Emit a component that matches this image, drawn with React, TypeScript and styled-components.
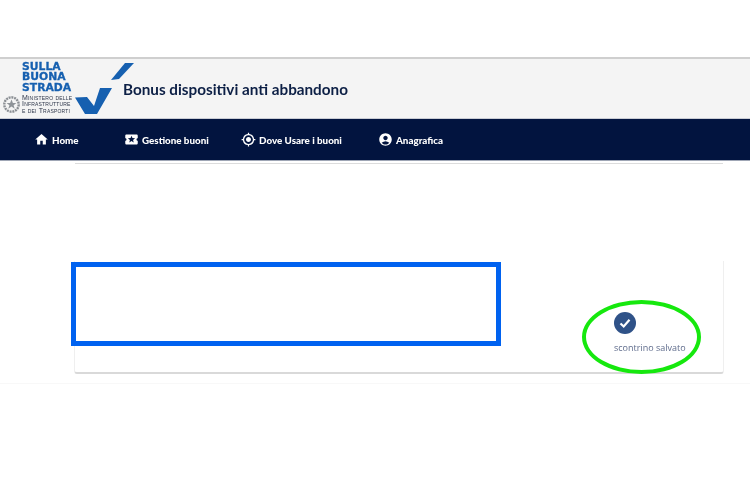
import React from "react";
import styled, { createGlobalStyle } from "styled-components";
import { MdHome, MdLocalActivity, MdMyLocation, MdAccountCircle } from "react-icons/md";

const Global = createGlobalStyle`
  html, body { margin: 0; padding: 0; background: #fff; }
  body { font-family: "Open Sans", "Liberation Sans", sans-serif; width: 750px; height: 480px; overflow: hidden; }
`;

const Page = styled.div`
  display: flex;
  flex-direction: column;
  padding-top: 57px;
`;

const Header = styled.header`
  display: flex;
  align-items: stretch;
  height: 59px;
  background: #f4f4f4;
  border-top: 2px solid #cfcfcf;
  box-sizing: content-box;
  border-bottom: 1px solid #c9ccd4;
`;

const Brand = styled.div`
  display: flex;
  flex-direction: column;
  width: 76px;
  padding: 3px 0 0 3px;
  box-sizing: border-box;
  flex: none;
`;

const BrandName = styled.div`
  margin-left: 19px;
  font-family: "DejaVu Sans", sans-serif;
  font-weight: 700;
  font-size: 10.8px;
  line-height: 10.4px;
  -webkit-text-stroke: 0.3px #1660b0;
  color: #1660b0;
  filter: blur(0.3px);
`;

const Ministry = styled.div`
  display: flex;
  align-items: center;
  gap: 2px;
  margin-top: 1px;
`;

const MinistryText = styled.div`
  font-family: "Liberation Sans", sans-serif;
  font-variant: small-caps;
  font-size: 7px;
  line-height: 6.6px;
  letter-spacing: 0.2px;
  color: #2b3448;
  white-space: nowrap;
  filter: blur(0.25px);
`;

const CheckMark = styled.svg`
  flex: none;
  width: 62px;
  height: 59px;
  margin-left: -4px;
`;

const Title = styled.h1`
  margin: 0 0 0 -11px;
  align-self: center;
  padding-top: 1px;
  font-family: "Lato", sans-serif;
  font-weight: 700;
  font-size: 15.25px;
  color: #0c1f45;
  white-space: nowrap;
  filter: blur(0.3px);
`;

const Nav = styled.nav`
  display: grid;
  grid-template-columns: 90px 117px 137px 1fr;
  align-items: center;
  height: 41px;
  padding-left: 35px;
  background: #02143f;
  border-bottom: 1px solid #9fa6b5;
`;

const NavItem = styled.a`
  display: flex;
  align-items: center;
  gap: 3px;
  color: #fff;
  font-family: "Lato", sans-serif;
  font-weight: 900;
  font-size: 9.8px;
  white-space: nowrap;
  filter: blur(0.3px);
  svg { width: 15px; height: 15px; flex: none; margin-left: -1px; }
`;

const CardTail = styled.div`
  height: 2px;
  margin: 0 27px 0 75px;
  background: #fff;
  border-bottom: 1px solid #dcdcdc;
`;

const Card = styled.section`
  position: relative;
  display: flex;
  justify-content: flex-end;
  height: 113px;
  margin: 97px 26px 0 74px;
  background: #fff;
  border-left: 1px solid #efefef;
  border-right: 1px solid #efefef;
  border-bottom: 2px solid #d9d9d9;
  border-radius: 0 0 3px 3px;
  box-sizing: border-box;
`;

const Redaction = styled.div`
  position: absolute;
  left: -4px;
  top: 1px;
  width: 430px;
  height: 84px;
  box-sizing: border-box;
  border: 5px solid #0062f0;
`;

const Status = styled.div`
  position: relative;
  display: flex;
  flex-direction: column;
  align-items: flex-start;
  gap: 8px;
  width: 109px;
  padding-top: 51px;
  box-sizing: border-box;
`;

const StatusIcon = styled.span`
  display: flex;
  align-items: center;
  justify-content: center;
  width: 22px;
  height: 22px;
  border-radius: 50%;
  background: #2f5288;
  color: #fff;
`;

const StatusText = styled.span`
  font-family: "Open Sans", sans-serif;
  font-size: 9px;
  line-height: 12px;
  color: #5f6c8c;
  white-space: nowrap;
  filter: blur(0.25px);
`;

const Highlight = styled.div`
  position: absolute;
  left: -32px;
  top: 39px;
  width: 119px;
  height: 74px;
  box-sizing: border-box;
  border: 4px solid #16e80e;
  border-radius: 50%;
`;

const FooterEdge = styled.div`
  margin-top: 9px;
  border-top: 1px solid #f8f8f8;
`;

export default function App() {
  return (
    <>
      <Global />
      <Page>
        <Header>
          <Brand>
            <BrandName>SULLA<br />BUONA<br />STRADA</BrandName>
            <Ministry>
              <svg width="17" height="21" viewBox="0 0 17 21" style={{ flex: "none" }}>
                <circle cx="8.5" cy="10.5" r="7.2" fill="none" stroke="#8b8f94" strokeWidth="2.4" strokeDasharray="2 0.8" />
                <path d="M8.5 5.5l1.4 3.500h3.500l-2.800 2.200 1.100 3.500-3.200-2.100-3.200 2.100 1.100-3.500-2.800-2.200h3.500z" fill="#8f9499" />
              </svg>
              <MinistryText>Ministero delle<br />Infrastrutture<br />e dei Trasporti</MinistryText>
            </Ministry>
          </Brand>
          <CheckMark viewBox="0 0 62 59">
            <path d="M3 38.5L15 38l7 9 6-18h12L25 55H13z" fill="#1660b0" />
            <path d="M39 21L53 4h9L47 20z" fill="#1660b0" />
          </CheckMark>
          <Title>Bonus dispositivi anti abbandono</Title>
        </Header>
        <Nav>
          <NavItem><MdHome />Home</NavItem>
          <NavItem><MdLocalActivity />Gestione buoni</NavItem>
          <NavItem><MdMyLocation />Dove Usare i buoni</NavItem>
          <NavItem><MdAccountCircle />Anagrafica</NavItem>
        </Nav>
        <CardTail />
        <Card>
          <Redaction />
          <Status>
            <StatusIcon>
              <svg width="14" height="14" viewBox="0 0 14 14">
                <path d="M2.5 7.5L5.700 10.500 11.500 3.800" fill="none" stroke="currentColor" strokeWidth="2.200" />
              </svg>
            </StatusIcon>
            <StatusText>scontrino salvato</StatusText>
            <Highlight />
          </Status>
        </Card>
        <FooterEdge />
      </Page>
    </>
  );
}
